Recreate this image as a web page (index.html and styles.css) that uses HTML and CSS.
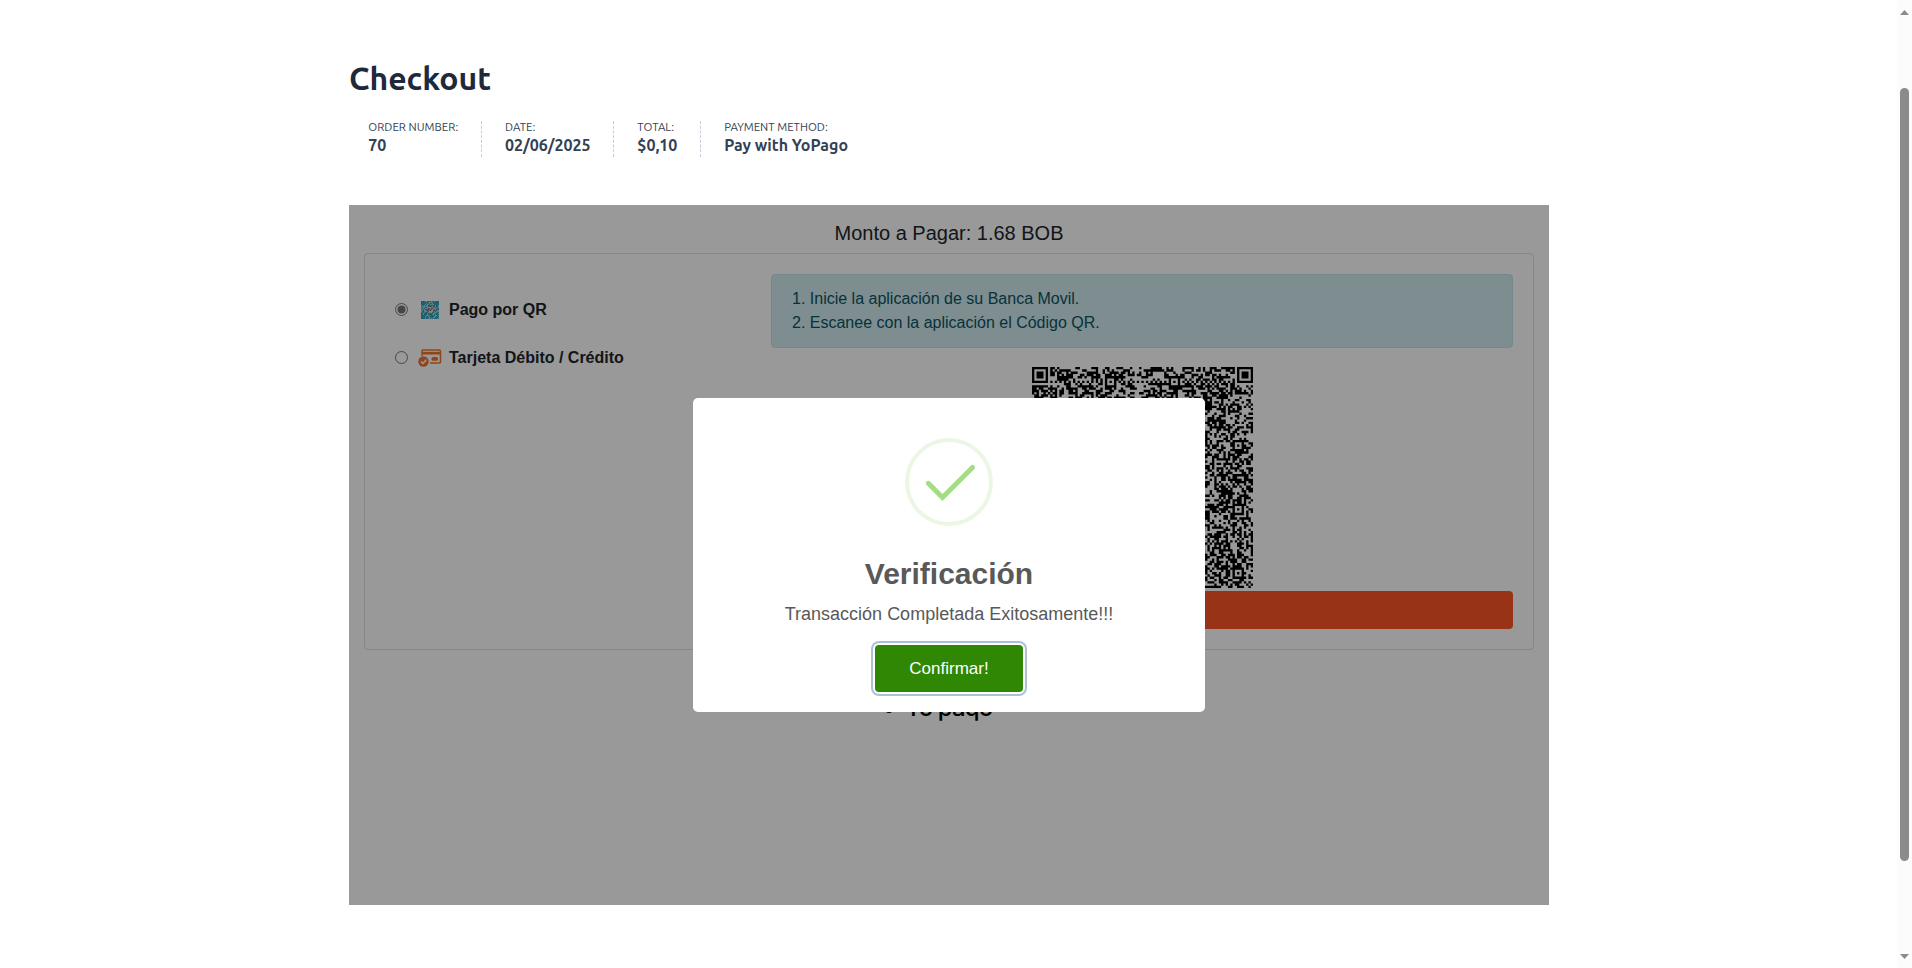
FILE: index.html
```html
<!DOCTYPE html>
<html lang="es">
<head>
<meta charset="utf-8">
<title>Checkout</title>
<link rel="stylesheet" href="styles.css">
</head>
<body>
<main class="page">
  <h1 class="page-title"><span>Checkout</span></h1>
  <ul class="order">
    <li class="order-item"><span class="order-label">Order number:</span><strong>70</strong></li>
    <li class="order-item"><span class="order-label">Date:</span><strong>02/06/2025</strong></li>
    <li class="order-item"><span class="order-label">Total:</span><strong>$0,10</strong></li>
    <li class="order-item order-method"><span class="order-label">Payment method:</span><strong>Pay with YoPago</strong></li>
  </ul>
  <section class="frame">
    <h5 class="amount">Monto a Pagar: 1.68 BOB</h5>
    <div class="card">
      <div class="methods">
        <label class="method">
          <svg class="radio" viewBox="0 0 13 13"><circle cx="6.5" cy="6.5" r="6" fill="#fff" stroke="#767676"/><circle cx="6.5" cy="6.5" r="4" fill="#767676"/></svg>
          <span class="method-icon"><svg id="mini-qr" width="18" height="18" viewBox="0 0 18 18"></svg></span>
          <b>Pago por QR</b>
        </label>
        <label class="method">
          <svg class="radio" viewBox="0 0 13 13"><circle cx="6.5" cy="6.5" r="6" fill="#fff" stroke="#767676"/></svg>
          <span class="method-icon"><svg width="24" height="18" viewBox="0 0 24 18">
            <path d="M4 7V2.200Q4 1 5.200 1H21.300Q22.500 1 22.500 2.200V13Q22.500 14 21.500 14H12" fill="none" stroke="#f0752d" stroke-width="1.500"/>
            <path d="M4 2.800H22.500V5.500H4Z" fill="#f0752d"/>
            <rect x="13.500" y="8" width="6.500" height="3.800" rx="1.500" fill="#f0752d"/>
            <circle cx="5.500" cy="12.500" r="5.200" fill="#f0752d"/>
            <path d="M3 12.500L5 14.500L8.300 10.700" fill="none" stroke="#fff" stroke-width="1.500"/>
          </svg></span>
          <b>Tarjeta Débito / Crédito</b>
        </label>
      </div>
      <div class="detail">
        <div class="alert"><div>1. Inicie la aplicación de su Banca Movil.</div><div>2. Escanee con la aplicación el Código QR.</div></div>
        <svg id="qr" class="qr" viewBox="0 0 97 97"></svg>
        <div class="pay-button"></div>
      </div>
    </div>
    <div class="brand"><span class="brand-dot"></span><span class="brand-name">Yo paqo</span></div>
    <div class="backdrop">
      <div class="modal" role="dialog">
        <svg class="check" width="88" height="88" viewBox="0 0 88 88" fill="none">
          <circle cx="44" cy="44" r="42" stroke="#a5dc86" stroke-opacity=".22" stroke-width="4"/>
          <path d="M23.300 45.300L37.500 59.500L67.500 29.500" stroke="#a5dc86" stroke-width="5" stroke-linecap="round"/>
        </svg>
        <h2 class="modal-title">Verificación</h2>
        <div class="modal-text">Transacción Completada Exitosamente!!!</div>
        <button class="confirm">Confirmar!</button>
      </div>
    </div>
  </section>
</main>
<div class="scrollbar"><i class="arrow-up"></i><i class="thumb"></i><i class="arrow-down"></i></div>
<script src="script.js"></script>
</body>
</html>
```
FILE: styles.css
```css
* { box-sizing: border-box; }
html, body { height: 100%; }
body { margin: 0; background: #fff; overflow: hidden; font-family: "Liberation Sans", Arial, sans-serif; }
.page { width: 1200px; margin-left: 349px; padding-top: 55px; }
.page-title { margin: 0; height: 46px; font: 600 32px/46px Ubuntu, "Noto Sans", sans-serif; color: #1e293b; }
.order { display: flex; list-style: none; margin: 20px 0 0; padding: 0 0 0 19.300px; height: 84px; font-family: Ubuntu, "Noto Sans", sans-serif; font-size: 11.440px; color: #334155; }
.order-item { height: 36px; margin-right: 2em; padding-right: 2em; border-right: 1px dashed #cfc8d8; white-space: nowrap; }
.order-label { display: block; line-height: 12px; text-transform: uppercase; }
.order-item strong { display: block; font-size: 16px; line-height: 24px; font-weight: 600; }
.order-method { border: 0; margin: 0; }
.frame { position: relative; height: 700px; padding: 16px 15px 0; color: #212529; }
.amount { margin: 0 0 8px; font-size: 20px; line-height: 24px; font-weight: 400; text-align: center; }
.card { display: flex; height: 397px; padding: 20px; border: 1px solid rgba(0,0,0,.125); border-radius: 4px; }
.methods { width: 386px; padding: 12px 0 0 10px; }
.method { display: flex; align-items: center; height: 48px; font-size: 16px; }
.radio { width: 13px; height: 13px; margin-bottom: 1px; }
.method-icon { display: flex; justify-content: center; width: 24px; margin: 0 7px 0 10px; }
.detail { flex: 1; display: flex; flex-direction: column; align-items: center; }
.alert { width: 100%; height: 74px; padding: 12px 20px; border: 1px solid #bee5eb; border-radius: 4px; background: #d1ecf1; color: #0c5460; font-size: 16px; line-height: 24px; }
.qr { width: 221px; height: 221px; margin: 19px 0 3px; }
.pay-button { width: 100%; height: 38px; border-radius: 4px; background: #fe5528; }
.brand { display: flex; align-items: flex-end; height: 73px; padding-left: 521px; }
.brand-dot { width: 8px; height: 8px; margin: 0 12px 10px 0; border-radius: 50%; background: #000; }
.brand-name { font: 500 24px/30px Inter, "Noto Sans", sans-serif; color: #000; letter-spacing: -0.900px; }
.backdrop { position: absolute; inset: 0; display: flex; align-items: center; justify-content: center; background: rgba(0,0,0,.4); }
.modal { display: flex; flex-direction: column; align-items: center; width: 512px; height: 314px; padding-top: 40px; border-radius: 5px; background: #fff; color: #595959; }
.modal-title { margin: 30px 0 0; font-size: 30px; line-height: 36px; font-weight: 700; }
.modal-text { margin-top: 11px; font-size: 18px; line-height: 22px; }
.confirm { width: 148px; height: 47px; margin-top: 20px; padding: 0; border: 0; border-radius: 4px; background: #308703; color: #fff; font: 17px "Liberation Sans", Arial, sans-serif; box-shadow: 0 0 0 2px #fff, 0 0 0 4px rgba(50,100,150,.4); }
.scrollbar { position: fixed; top: 0; right: 0; bottom: 0; width: 15px; padding: 10px 3px 9px; display: flex; flex-direction: column; background: #fcfcfc; }
.scrollbar i { display: block; background: #8b8b8b; }
.arrow-up { height: 5px; clip-path: polygon(50% 0, 100% 100%, 0 100%); }
.arrow-down { height: 5px; margin-top: auto; clip-path: polygon(0 0, 100% 0, 50% 100%); }
.thumb { height: 773px; margin-top: 73px; border-radius: 5px; }
```
FILE: script.js
```js
let seed = 20;
function random() {
  seed = (seed * 1664525 + 1013904223) >>> 0;
  return seed / 4294967296;
}

// 97-module code: three finders, alignment marks every 28 modules
const N = 97;
const marks = [6, 34, 62, 90];
function module(x, y) {
  for (const [fx, fy] of [[3, 3], [N - 4, 3], [3, N - 4]]) {
    const d = Math.max(Math.abs(x - fx), Math.abs(y - fy));
    if (d <= 4) return d !== 2 && d !== 4;
  }
  for (const ax of marks) for (const ay of marks) {
    if ((ax === 6 && (ay === 6 || ay === 90)) || (ax === 90 && ay === 6)) continue;
    const d = Math.max(Math.abs(x - ax), Math.abs(y - ay));
    if (d <= 2) return d !== 1;
  }
  if (y === 6) return x % 2 === 0;
  if (x === 6) return y % 2 === 0;
  return random() < 0.5;
}
let path = "";
for (let y = 0; y < N; y++) for (let x = 0; x < N; x++) {
  if (module(x, y)) path += `M${x} ${y}h1.03v1.03h-1.03z`;
}
document.getElementById("qr").innerHTML = `<path d="${path}" fill="#000"/>`;

let mini = "";
for (let y = 0; y < 18; y++) for (let x = 0; x < 18; x++) {
  const corner = (x < 4 || x > 13) && y < 4 || x < 4 && y > 13;
  if (corner || random() < 0.5) mini += `M${x} ${y}h1v1h-1z`;
}
document.getElementById("mini-qr").innerHTML =
  `<rect width="18" height="18" fill="#a9d0d8"/><path d="${mini}" fill="#2fa0bc"/>` +
  `<circle cx="9" cy="9" r="3" fill="#ddd"/><path d="M7 11V8h2M9 10l2-3" stroke="#633" fill="none"/><circle cx="11" cy="7.5" r="1" fill="#f60"/>`;
```
